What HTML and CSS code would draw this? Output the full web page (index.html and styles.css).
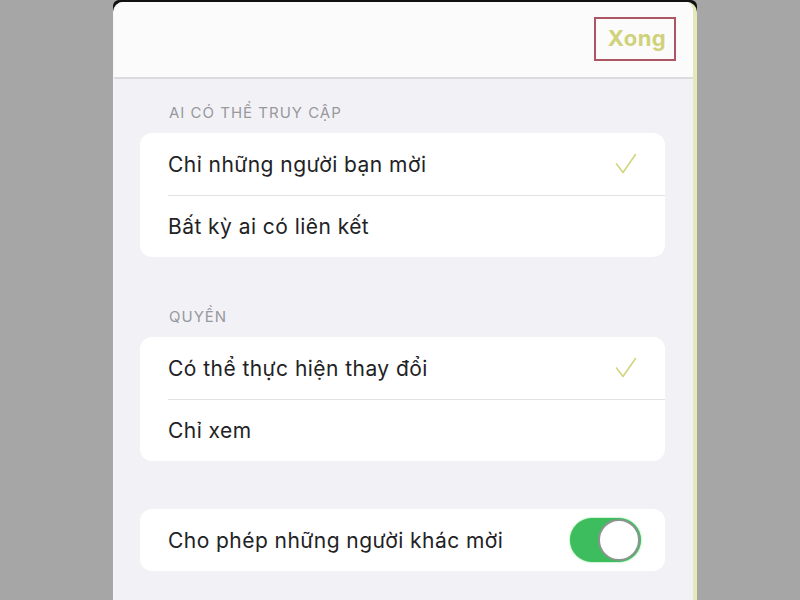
FILE: index.html
```html
<!DOCTYPE html>
<html lang="vi">
<head>
<meta charset="utf-8">
<title>Chia sẻ</title>
<link rel="stylesheet" href="styles.css">
</head>
<body>
<div class="frame">
  <div class="panel">
    <header class="topbar">
      <button class="done">Xong</button>
    </header>
    <main class="content">
      <div class="section-label first">AI CÓ THỂ TRUY CẬP</div>
      <div class="card">
        <div class="row">
          <span class="row-text">Chỉ những người bạn mời</span>
          <svg class="check" width="22" height="22" viewBox="0 0 22 22"><path d="M1.5 11 L8 19.5 L20.5 1.5" fill="none" stroke="#d3d47e" stroke-width="1.6" stroke-linecap="round" stroke-linejoin="round"/></svg>
        </div>
        <div class="row">
          <span class="row-text">Bất kỳ ai có liên kết</span>
        </div>
      </div>
      <div class="section-label">QUYỀN</div>
      <div class="card">
        <div class="row">
          <span class="row-text">Có thể thực hiện thay đổi</span>
          <svg class="check" width="22" height="22" viewBox="0 0 22 22"><path d="M1.5 11 L8 19.5 L20.5 1.5" fill="none" stroke="#d3d47e" stroke-width="1.6" stroke-linecap="round" stroke-linejoin="round"/></svg>
        </div>
        <div class="row">
          <span class="row-text">Chỉ xem</span>
        </div>
      </div>
      <div class="card toggle-card">
        <div class="row">
          <span class="row-text">Cho phép những người khác mời</span>
          <span class="toggle"><span class="knob"></span></span>
        </div>
      </div>
    </main>
  </div>
</div>
</body>
</html>
```
FILE: styles.css
```css
html, body {
  margin: 0;
  padding: 0;
  height: 100%;
}
body {
  background: #a6a6a6;
  font-family: Inter, "Noto Sans", "Liberation Sans", sans-serif;
  overflow: hidden;
}
.frame {
  margin-left: 113px;
  width: 584px;
  height: 600px;
  background: #111;
  padding-top: 2px;
  box-sizing: border-box;
  border-radius: 6px 6px 0 0;
}
.panel {
  height: 598px;
  background: #f2f2f6;
  border-radius: 10px 10px 0 0;
  border-right: 4px solid #e5e9b9;
  border-left: 1px solid #f6f6f6;
  overflow: hidden;
}
.topbar {
  height: 75px;
  background: #fbfbfb;
  border-bottom: 2px solid #dcdcdf;
  display: flex;
  justify-content: flex-end;
  align-items: flex-start;
  padding-right: 17px;
}
.done {
  margin-top: 15px;
  width: 82px;
  height: 44px;
  border: 2px solid #ad5663;
  background: transparent;
  color: #cfd27a;
  font-family: Inter, "Liberation Sans", sans-serif;
  font-weight: 700;
  font-size: 22px;
  letter-spacing: 0.4px;
  padding: 0 0 3px 4px;
  text-align: center;
}
.content {
  padding: 0 28px 0 26px;
}
.section-label {
  margin: 50px 0 10px 29px;
  height: 20px;
  line-height: 20px;
  font-size: 15px;
  letter-spacing: 1px;
  color: #98989d;
}
.section-label.first {
  margin-top: 24px;
}
.card {
  background: #ffffff;
  border-radius: 12px;
  overflow: hidden;
}
.toggle-card {
  margin-top: 48px;
}
.row {
  height: 62px;
  margin-left: 28px;
  padding-right: 25px;
  display: flex;
  align-items: center;
  justify-content: space-between;
  box-sizing: border-box;
}
.row + .row {
  border-top: 1px solid #e2e2e4;
}
.row-text {
  font-size: 21px;
  color: #222224;
  letter-spacing: 0.45px;
}
.check {
  margin-right: 3px;
}
.toggle-card .row {
  padding-right: 24px;
}
.toggle {
  width: 71px;
  height: 44px;
  border-radius: 22px;
  background: #3dbd5e;
  box-shadow: 0 0 2px #5fdc70;
  display: flex;
  justify-content: flex-end;
  align-items: center;
}
.knob {
  width: 38px;
  height: 38px;
  border-radius: 50%;
  background: #ffffff;
  border: 2px solid #8a9590;
  margin-right: 1px;
}
```
